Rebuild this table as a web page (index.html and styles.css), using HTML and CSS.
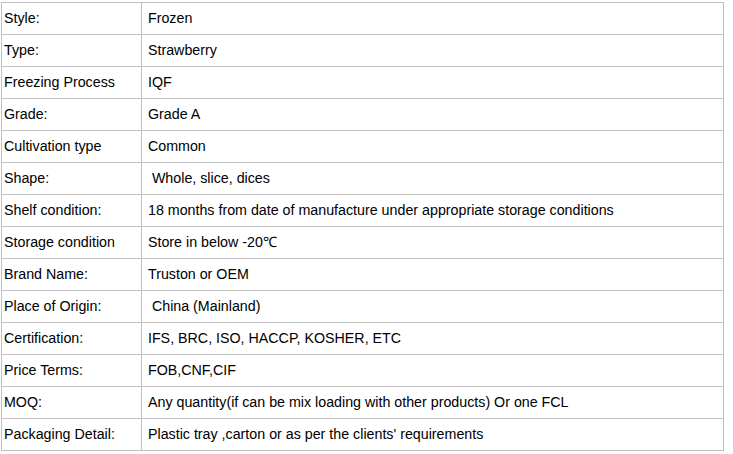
FILE: index.html
```html
<!DOCTYPE html>
<html>
<head>
<meta charset="utf-8">
<link rel="stylesheet" href="styles.css">
</head>
<body>
<table class="spec">
<tr><td class="k">Style:</td><td class="v">&nbsp;Frozen</td></tr>
<tr><td class="k">Type:</td><td class="v">&nbsp;Strawberry</td></tr>
<tr><td class="k">Freezing Process</td><td class="v">&nbsp;IQF</td></tr>
<tr><td class="k">Grade:</td><td class="v">&nbsp;Grade A</td></tr>
<tr><td class="k">Cultivation type</td><td class="v">&nbsp;Common</td></tr>
<tr><td class="k">Shape:</td><td class="v">&nbsp;&nbsp;Whole, slice, dices</td></tr>
<tr><td class="k">Shelf condition:</td><td class="v">&nbsp;18 months from date of manufacture under appropriate storage conditions</td></tr>
<tr><td class="k">Storage condition</td><td class="v">&nbsp;Store in below -20℃</td></tr>
<tr><td class="k">Brand Name:</td><td class="v">&nbsp;Truston or OEM</td></tr>
<tr><td class="k">Place of Origin:</td><td class="v">&nbsp;&nbsp;China (Mainland)</td></tr>
<tr><td class="k">Certification:</td><td class="v">&nbsp;IFS, BRC, ISO, HACCP, KOSHER, ETC</td></tr>
<tr><td class="k">Price Terms:</td><td class="v">&nbsp;FOB,CNF,CIF</td></tr>
<tr><td class="k">MOQ:</td><td class="v">&nbsp;Any quantity(if can be mix loading with other products) Or one FCL</td></tr>
<tr><td class="k">Packaging Detail:</td><td class="v">&nbsp;Plastic tray ,carton or as per the clients' requirements</td></tr>
</table>
</body>
</html>
```
FILE: styles.css
```css
html, body {
  margin: 0;
  padding: 0;
  background: #ffffff;
}
body {
  padding: 2px 0 0 1px;
  font-family: "Liberation Sans", Arial, sans-serif;
  font-size: 14.25px;
  color: #000000;
}
.spec {
  border-collapse: collapse;
  width: 723px;
  table-layout: fixed;
}
.spec td {
  border: 1px solid #c0c0c0;
  height: 32px;
  padding: 0 2px 2px 2px;
  vertical-align: middle;
  white-space: nowrap;
  box-sizing: border-box;
  line-height: 16px;
}
.spec td.k {
  width: 140px;
}
```
